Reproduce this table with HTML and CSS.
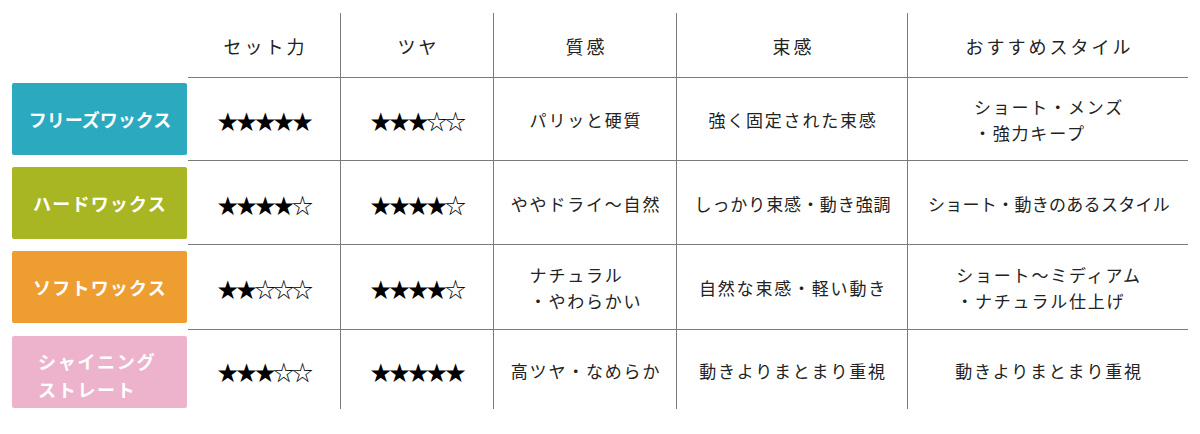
FILE: index.html
```html
<!DOCTYPE html>
<html lang="ja">
<head>
<meta charset="utf-8">
<title>ワックス比較</title>
<link rel="stylesheet" href="styles.css">
</head>
<body>
<div class="chart">
  <div class="corner"></div>
  <div class="head">セット力</div>
  <div class="head sep">ツヤ</div>
  <div class="head sep">質感</div>
  <div class="head sep">束感</div>
  <div class="head sep">おすすめスタイル</div>

  <div class="label label-freeze"><span>フリーズワックス</span></div>
  <div class="cell stars">★★★★★</div>
  <div class="cell sep stars">★★★☆☆</div>
  <div class="cell sep"><span class="txt">パリッと硬質</span></div>
  <div class="cell sep"><span class="txt">強く固定された束感</span></div>
  <div class="cell sep"><span class="txt multi">ショート・メンズ<br>・強力キープ</span></div>

  <div class="label label-hard"><span>ハードワックス</span></div>
  <div class="cell stars">★★★★☆</div>
  <div class="cell sep stars">★★★★☆</div>
  <div class="cell sep"><span class="txt">ややドライ〜自然</span></div>
  <div class="cell sep"><span class="txt tight">しっかり束感・動き強調</span></div>
  <div class="cell sep"><span class="txt tighter">ショート・動きのあるスタイル</span></div>

  <div class="label label-soft"><span>ソフトワックス</span></div>
  <div class="cell stars">★★☆☆☆</div>
  <div class="cell sep stars">★★★★☆</div>
  <div class="cell sep"><span class="txt multi">ナチュラル<br>・やわらかい</span></div>
  <div class="cell sep"><span class="txt">自然な束感・軽い動き</span></div>
  <div class="cell sep"><span class="txt multi">ショート〜ミディアム<br>・ナチュラル仕上げ</span></div>

  <div class="label label-shine"><span class="multi">シャイニング<br>ストレート</span></div>
  <div class="cell last stars">★★★☆☆</div>
  <div class="cell last sep stars">★★★★★</div>
  <div class="cell last sep"><span class="txt">高ツヤ・なめらか</span></div>
  <div class="cell last sep"><span class="txt">動きよりまとまり重視</span></div>
  <div class="cell last sep"><span class="txt">動きよりまとまり重視</span></div>
</div>
</body>
</html>
```
FILE: styles.css
```css
* {
  box-sizing: border-box;
}

html, body {
  margin: 0;
  padding: 0;
  background: #ffffff;
}

body {
  font-family: "Noto Sans CJK JP", "Noto Sans", sans-serif;
  color: #222222;
}

.chart {
  display: grid;
  grid-template-columns: 176px 152px 153px 183px 231px 281px;
  grid-template-rows: 65px 83px 84px 85px 79px;
  padding: 13px 12px 0 12px;
}

.head,
.cell {
  display: flex;
  align-items: center;
  justify-content: center;
  text-align: center;
  border-bottom: 1px solid #7a7a7a;
}

.sep {
  border-left: 1px solid #7a7a7a;
}

.cell.last {
  border-bottom: none;
}

.head {
  font-size: 18px;
  letter-spacing: 3px;
  padding-left: 3px;
  padding-top: 2px;
}

.cell {
  font-size: 17px;
  letter-spacing: 1.8px;
  padding-left: 2px;
  padding-top: 2px;
}

.txt {
  line-height: 26px;
}

.tight {
  letter-spacing: 0.9px;
}

.tighter {
  letter-spacing: 0.3px;
}

.multi {
  display: inline-block;
  text-align: left;
}

.stars {
  font-size: 21px;
  letter-spacing: -2.3px;
  padding-left: 0;
  color: #000000;
}

.label {
  align-self: start;
  margin-top: 6px;
  margin-right: 1px;
  height: 72px;
  border-radius: 2px;
  display: flex;
  align-items: center;
  justify-content: center;
  color: #ffffff;
  font-weight: 700;
  font-size: 18px;
  letter-spacing: 1.2px;
  padding-left: 1px;
}

.label .multi {
  line-height: 28px;
  padding-top: 6px;
}

.label-freeze {
  background: #2ba9be;
  letter-spacing: 0;
  margin-top: 5px;
}

.label-hard {
  background: #a9b623;
}

.label-soft {
  background: #ee9d30;
}

.label-shine {
  background: #edb3cd;
  letter-spacing: 1.7px;
  justify-content: flex-start;
  padding-left: 26px;
}
```
